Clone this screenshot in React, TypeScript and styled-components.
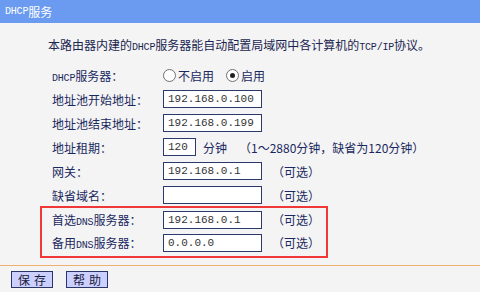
import styled, { createGlobalStyle } from "styled-components";

const GlobalStyle = createGlobalStyle`
  html, body {
    margin: 0;
    padding: 0;
    background: #f4f4f4;
  }
  body {
    width: 480px;
    height: 292px;
    overflow: hidden;
    font-family: "Noto Sans CJK SC", sans-serif;
    font-size: 12px;
    color: #1a2a66;
  }
`;

const TitleBar = styled.div`
  height: 23px;
  display: flex;
  align-items: center;
  padding-left: 5px;
  background: #6b9bf0;
  color: #ffffff;
  font-size: 12px;
`;

const Lat = styled.span`
  font-family: "Liberation Mono", monospace;
  font-size: 10px;
  letter-spacing: -0.2px;
`;

const Intro = styled.p`
  margin: 0;
  padding: 14px 0 0 48px;
  height: 22px;
  line-height: 16px;
  color: #1a2450;
`;

const Form = styled.div`
  display: flex;
  flex-direction: column;
  padding: 4px 0 0 40px;
`;

const Row = styled.div<{ $h?: number }>`
  display: grid;
  grid-template-columns: 111px auto;
  align-items: center;
  height: ${(p) => p.$h ?? 24}px;
  padding-left: 12px;
`;

const Label = styled.span`
  white-space: nowrap;
  color: #1a2860;
`;

const Field = styled.div`
  display: flex;
  align-items: center;
  white-space: nowrap;
`;

const Input = styled.div<{ $w?: number }>`
  width: ${(p) => p.$w ?? 93}px;
  height: 16px;
  border: 1px solid #2b3a6b;
  background: #ffffff;
  box-sizing: content-box;
  display: flex;
  align-items: center;
  padding-left: 4px;
  font-family: "Liberation Mono", monospace;
  font-size: 11px;
  color: #333333;
`;

const Note = styled.span<{ $gap?: number }>`
  margin-left: ${(p) => p.$gap ?? 10}px;
  color: #1a2860;
`;

const Radio = styled.span<{ $on?: boolean }>`
  width: 11px;
  height: 11px;
  border-radius: 50%;
  border: 1px solid #707070;
  background: #ffffff;
  display: inline-flex;
  align-items: center;
  justify-content: center;
  margin-right: 2px;
  &::after {
    content: "";
    width: 5px;
    height: 5px;
    border-radius: 50%;
    background: ${(p) => (p.$on ? "#202020" : "transparent")};
  }
`;

const RadioLabel = styled.span`
  margin-right: 12px;
  color: #1a2860;
`;

const Highlight = styled.div`
  width: 284px;
  border: 2px solid #f03838;
  margin-top: -1px;
  padding: 0 0 2px;
  & > div {
    padding-left: 10px;
  }
`;

const Divider = styled.div`
  height: 1px;
  background: #f0b070;
  margin-top: 7px;
`;

const Toolbar = styled.div`
  display: flex;
  gap: 13px;
  padding: 5px 0 0 11px;
`;

const Button = styled.button`
  width: 42px;
  height: 17px;
  padding: 0;
  border: 1px solid #2a3668;
  background: #ccd0ff;
  color: #1a1a3a;
  font-family: "Noto Sans CJK SC", sans-serif;
  font-size: 12px;
  letter-spacing: 4px;
  text-indent: 4px;
  line-height: 15px;
`;

export default function App() {
  return (
    <>
      <GlobalStyle />
      <TitleBar>
        <Lat>DHCP</Lat>服务
      </TitleBar>
      <Intro>
        本路由器内建的<Lat>DHCP</Lat>服务器能自动配置局域网中各计算机的<Lat>TCP/IP</Lat>协议。
      </Intro>
      <Form>
        <Row>
          <Label>
            <Lat>DHCP</Lat>服务器：
          </Label>
          <Field>
            <Radio />
            <RadioLabel>不启用</RadioLabel>
            <Radio $on />
            <RadioLabel>启用</RadioLabel>
          </Field>
        </Row>
        <Row>
          <Label>地址池开始地址：</Label>
          <Field>
            <Input>192.168.0.100</Input>
          </Field>
        </Row>
        <Row>
          <Label>地址池结束地址：</Label>
          <Field>
            <Input>192.168.0.199</Input>
          </Field>
        </Row>
        <Row>
          <Label>地址租期：</Label>
          <Field>
            <Input $w={27}>120</Input>
            <Note $gap={7}>分钟</Note>
            <Note $gap={12}>（1～2880分钟，缺省为120分钟）</Note>
          </Field>
        </Row>
        <Row>
          <Label>网关：</Label>
          <Field>
            <Input>192.168.0.1</Input>
            <Note>（可选）</Note>
          </Field>
        </Row>
        <Row>
          <Label>缺省域名：</Label>
          <Field>
            <Input />
            <Note>（可选）</Note>
          </Field>
        </Row>
        <Highlight>
          <Row $h={23}>
            <Label>
              首选<Lat>DNS</Lat>服务器：
            </Label>
            <Field>
              <Input>192.168.0.1</Input>
              <Note>（可选）</Note>
            </Field>
          </Row>
          <Row $h={23}>
            <Label>
              备用<Lat>DNS</Lat>服务器：
            </Label>
            <Field>
              <Input>0.0.0.0</Input>
              <Note>（可选）</Note>
            </Field>
          </Row>
        </Highlight>
      </Form>
      <Divider />
      <Toolbar>
        <Button>保存</Button>
        <Button>帮助</Button>
      </Toolbar>
    </>
  );
}
